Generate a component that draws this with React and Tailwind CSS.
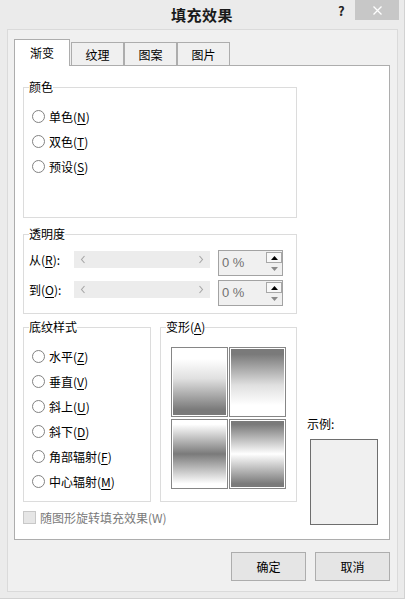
import React from "react";

function U({ children }) {
  return <span className="underline underline-offset-[2px]">{children}</span>;
}

function Group({ label, className = "", children }) {
  return (
    <div className={"relative border border-[#dcdcdc] " + className}>
      <span className="absolute top-[-9px] left-[5px] bg-white text-[12px] leading-[16px] text-black whitespace-nowrap">
        {label}
      </span>
      {children}
    </div>
  );
}

function Radio({ text, k }) {
  return (
    <div className="flex items-center h-[25px]">
      <span className="w-[13px] h-[13px] rounded-full border border-[#828282] bg-white shrink-0" />
      <span className="ml-[4px] text-[12px] leading-[16px] text-black whitespace-nowrap">
        {text}(<U>{k}</U>)
      </span>
    </div>
  );
}

function Tri({ up, color }) {
  return (
    <svg width="7" height="4" viewBox="0 0 7 4">
      {up ? (
        <polygon points="0,4 7,4 3.5,0" fill={color} />
      ) : (
        <polygon points="0,0 7,0 3.5,4" fill={color} />
      )}
    </svg>
  );
}

function SliderRow({ label, k }) {
  return (
    <div className="flex items-start h-[26px]">
      <span className="w-[45px] mt-px text-[12px] leading-[17px] text-black whitespace-nowrap">
        {label}(<U>{k}</U>):
      </span>
      <div className="mt-px w-[136px] h-[17px] bg-[#ececec] flex items-center justify-between pl-[6px] pr-[6px]">
        <svg width="6" height="9" viewBox="0 0 6 9">
          <polyline points="4.5,1 1.5,4.5 4.5,8" fill="none" stroke="#a6a6a6" strokeWidth="1.1" />
        </svg>
        <svg width="6" height="9" viewBox="0 0 6 9">
          <polyline points="1.5,1 4.5,4.5 1.5,8" fill="none" stroke="#a6a6a6" strokeWidth="1.1" />
        </svg>
      </div>
      <div className="ml-[8px] w-[65px] h-[26px] border border-[#a3a3a3] bg-[#f0f0f0] flex">
        <span className="flex-1 pl-[3px] text-[13px] leading-[24px] text-[#707070] font-['Liberation_Sans',sans-serif]">
          0 %
        </span>
        <div className="w-[16px] flex flex-col py-px">
          <div className="h-[11px] border border-[#a8a8a8] bg-[#f8f8f8] flex items-center justify-center">
            <Tri up color="#000" />
          </div>
          <div className="h-[11px] flex items-center justify-center">
            <Tri color="#8a8a8a" />
          </div>
        </div>
      </div>
    </div>
  );
}

function Cell({ bg }) {
  return (
    <div className="w-[57px] h-[70px] border border-[#868686] bg-white p-px">
      <div className={"w-full h-full " + bg} />
    </div>
  );
}

export default function App() {
  return (
    <div className="w-[405px] h-[599px] bg-[#ebebeb] border-r border-b border-[#d2d2d2] font-['Noto_Sans_CJK_SC',sans-serif] text-black overflow-hidden">
      {/* title bar */}
      <div className="relative h-[29px] flex items-center justify-center">
        <span className="text-[15px] leading-[20px] font-bold text-[#1a1a1a] tracking-[0.5px]">填充效果</span>
        <span className="absolute left-[338px] top-[3px] text-[13px] leading-[16px] font-bold text-[#222]">?</span>
        <div className="absolute left-[355px] top-0 w-[44px] h-[20px] bg-[#c7c7c7] flex items-center justify-center">
          <svg width="9" height="9" viewBox="0 0 9 9">
            <path d="M0.5 0.5 L8.5 8.5 M8.5 0.5 L0.5 8.5" stroke="#fff" strokeWidth="1.3" />
          </svg>
        </div>
      </div>

      {/* client area */}
      <div className="ml-[7px] w-[391px] h-[563px] border border-[#dadada] bg-[#f0f0f0] px-[6px] pt-[9px]">
        {/* tabs */}
        <div className="flex items-end h-[26px]">
          <div className="relative z-10 w-[56px] h-[27px] -mb-px bg-white border-l border-t border-r border-[#adadad] flex items-center justify-center text-[12px] leading-[16px]">
            渐变
          </div>
          <div className="w-[53px] h-[23px] ml-px bg-[#f0f0f0] border-l border-t border-r border-[#adadad] flex items-center justify-center text-[12px] leading-[16px] pt-[2px]">
            纹理
          </div>
          <div className="w-[53px] h-[23px] bg-[#f0f0f0] border-l border-t border-r border-[#adadad] flex items-center justify-center text-[12px] leading-[16px] pt-[2px]">
            图案
          </div>
          <div className="w-[53px] h-[23px] bg-[#f0f0f0] border-l border-t border-r border-[#adadad] flex items-center justify-center text-[12px] leading-[16px] pt-[2px]">
            图片
          </div>
        </div>

        {/* panel */}
        <div className="w-[376px] h-[475px] bg-white border border-[#adadad] pl-[8px] pt-[21px]">
          <Group label="颜色" className="w-[274px] h-[131px] pl-[8px] pt-[16px]">
            <Radio text="单色" k="N" />
            <Radio text="双色" k="T" />
            <Radio text="预设" k="S" />
          </Group>

          <Group label="透明度" className="mt-[16px] w-[274px] h-[80px] pl-[5px] pt-[15px]">
            <SliderRow label="从" k="R" />
            <div className="h-[4px]" />
            <SliderRow label="到" k="O" />
          </Group>

          <div className="mt-[13px] flex items-start">
            <div className="flex flex-col">
              <div className="flex gap-[9px]">
                <Group label="底纹样式" className="w-[128px] h-[175px] pl-[8px] pt-[16px]">
                  <Radio text="水平" k="Z" />
                  <Radio text="垂直" k="V" />
                  <Radio text="斜上" k="U" />
                  <Radio text="斜下" k="D" />
                  <Radio text="角部辐射" k="F" />
                  <Radio text="中心辐射" k="M" />
                </Group>
                <Group
                  label={
                    <>
                      变形(<U>A</U>)
                    </>
                  }
                  className="w-[137px] h-[175px] pl-[10px] pt-[19px]"
                >
                  <div className="grid grid-cols-[57px_57px] gap-x-[1px] gap-y-[2px]">
                    <Cell bg="bg-[linear-gradient(to_bottom,#ffffff_15%,#e0e0e0_45%,#7a7a7a_92%)]" />
                    <Cell bg="bg-[linear-gradient(to_bottom,#7a7a7a_8%,#e0e0e0_55%,#ffffff_85%)]" />
                    <Cell bg="bg-[linear-gradient(to_bottom,#ffffff_5%,#7a7a7a_50%,#ffffff_95%)]" />
                    <Cell bg="bg-[linear-gradient(to_bottom,#7a7a7a_5%,#ffffff_50%,#7a7a7a_95%)]" />
                  </div>
                </Group>
              </div>
              <div className="mt-[9px] flex items-center h-[13px]">
                <span className="w-[13px] h-[13px] border border-[#c8c8c8] bg-[#e6e6e6] shrink-0" />
                <span className="ml-[4px] text-[12px] leading-[16px] text-[#7a7a7a] whitespace-nowrap">
                  随图形旋转填充效果(W)
                </span>
              </div>
            </div>

            <div className="ml-[10px] flex flex-col">
              <span className="mt-[89px] text-[12px] leading-[16px]">示例:</span>
              <div className="mt-[7px] ml-[3px] w-[68px] h-[86px] border border-[#6e6e6e] bg-[#f0f0f0]" />
            </div>
          </div>
        </div>

        {/* buttons */}
        <div className="mt-[12px] w-[376px] flex justify-end gap-[9px]">
          <div className="w-[75px] h-[29px] border border-[#adadad] bg-[#e5e5e5] flex items-center justify-center text-[12px] leading-[16px]">
            确定
          </div>
          <div className="w-[75px] h-[29px] border border-[#adadad] bg-[#e5e5e5] flex items-center justify-center text-[12px] leading-[16px]">
            取消
          </div>
        </div>
      </div>
    </div>
  );
}
